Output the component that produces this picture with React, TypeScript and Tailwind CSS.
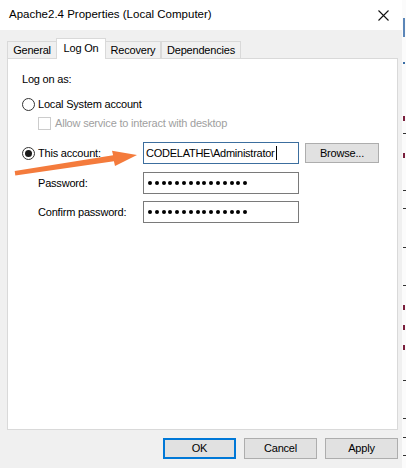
import React from "react";

const font = { fontFamily: '"Liberation Sans", Arial, sans-serif' };

function Radio({ checked }: { checked?: boolean }) {
  return (
    <div className="w-[13px] h-[13px] rounded-full border border-[#333333] bg-white flex items-center justify-center shrink-0">
      {checked && <div className="w-[7px] h-[7px] rounded-full bg-[#1a1a1a]" />}
    </div>
  );
}

function Dots() {
  return (
    <div className="flex gap-[2.8px] items-center pl-[4px]">
      {Array.from({ length: 15 }).map((_, i) => (
        <div key={i} className="w-[4px] h-[4px] rounded-full bg-black" />
      ))}
    </div>
  );
}

function Btn({ label, primary }: { label: string; primary?: boolean }) {
  return (
    <div
      className={
        "w-[73px] h-[21px] flex items-center justify-center bg-[#e1e1e1] text-[11px] tracking-[-0.2px] text-black " +
        (primary ? "border-2 border-[#0078d7]" : "border border-[#adadad]")
      }
    >
      {label}
    </div>
  );
}

export default function App() {
  const tabs = ["General", "Log On", "Recovery", "Dependencies"];
  const tabW = [49, 50, 55, 80];
  return (
    <div className="relative w-[406px] h-[468px] flex overflow-hidden bg-[#f0f0f0]" style={font}>
      {/* dialog */}
      <div className="w-[402px] h-[468px] flex flex-col bg-[#f0f0f0]">
        {/* title bar */}
        <div className="h-[30px] bg-white flex items-center justify-between pl-[9px] pr-[13px]">
          <span className="text-[11.5px] text-black">Apache2.4 Properties (Local Computer)</span>
          <svg width="11" height="11" viewBox="0 0 11 11">
            <path d="M0.5 0.5 L10.5 10.5 M10.5 0.5 L0.5 10.5" stroke="#111" strokeWidth="1.1" />
          </svg>
        </div>
        {/* tabs */}
        <div className="flex items-end pl-[7px] mt-[8px] h-[20px]">
          {tabs.map((t, i) => {
            const sel = i === 1;
            return (
              <div
                key={t}
                style={{ width: tabW[i] }}
                className={
                  "flex items-center justify-center text-[11px] tracking-[-0.2px] text-black border-[#d9d9d9] border-t border-l border-r " +
                  (sel
                    ? "h-[21px] bg-white -mb-px relative z-10 "
                    : "h-[17px] bg-[#f0f0f0] ") +
                  (i === 2 ? "border-l-0 " : "") +
                  (i === 0 ? "border-r-0 " : "")
                }
              >
                <span className={sel ? "-mt-[2px]" : ""}>{t}</span>
              </div>
            );
          })}
        </div>
        {/* panel */}
        <div className="ml-[7px] w-[391px] h-[372px] bg-white border border-[#d9d9d9] flex flex-col text-[11px] tracking-[-0.2px] text-black">
          <div className="h-[20px] mt-[10px] flex items-center pl-[14px]">Log on as:</div>
          <div className="h-[20px] mt-[5px] flex items-center pl-[14px] gap-[3px]">
            <Radio />
            <span>Local System account</span>
          </div>
          <div className="h-[18px] flex items-center pl-[30px] gap-[4px]">
            <div className="w-[13px] h-[13px] border border-[#cccccc] bg-white" />
            <span className="text-[#a0a0a0]">Allow service to interact with desktop</span>
          </div>
          <div className="h-[22px] mt-[10px] flex items-center pl-[14px]">
            <div className="w-[121px] flex items-center gap-[3px]">
              <Radio checked />
              <span>This account:</span>
            </div>
            <div className="w-[156px] h-[22px] border border-[#3c6e9e] flex items-center pl-[2px]">
              <span className="text-[11px] tracking-[-0.25px]">CODELATHE\Administrator</span>
              <div className="w-px h-[14px] bg-black ml-[1px]" />
            </div>
            <div className="ml-[6px] w-[74px] h-[20px] bg-[#e1e1e1] border border-[#adadad] flex items-center justify-center">
              Browse...
            </div>
          </div>
          <div className="h-[22px] mt-[8px] flex items-center pl-[30px]">
            <div className="w-[105px]">Password:</div>
            <div className="w-[156px] h-[22px] border border-[#7a7a7a] flex items-center">
              <Dots />
            </div>
          </div>
          <div className="h-[22px] mt-[7px] flex items-center pl-[30px]">
            <div className="w-[105px]">Confirm password:</div>
            <div className="w-[156px] h-[22px] border border-[#7a7a7a] flex items-center">
              <Dots />
            </div>
          </div>
        </div>
        {/* buttons */}
        <div className="flex justify-end gap-[8px] pr-[4px] mt-[8px]">
          <Btn label="OK" primary />
          <Btn label="Cancel" />
          <Btn label="Apply" />
        </div>
      </div>
      {/* background window strip */}
      <div className="relative w-[4px] h-[468px] bg-[#fbfbfb]">
        <div className="absolute left-[1px] top-[18px] w-[2px] h-[19px] bg-[#5b86b8]" />
        <div className="absolute left-[1px] top-[62px] w-[2px] h-[2px] bg-[#3a6ea5]" />
        {[116, 153, 305, 325, 345].map((y) => (
          <div key={y} className="absolute left-[1px] w-[2px] h-[5px] bg-[#7a1f3d]" style={{ top: y }} />
        ))}
        {[133, 190, 208, 247, 285, 380, 418, 437, 455].map((y) => (
          <div key={y} className="absolute left-[1px] w-[3px] h-px bg-[#333]" style={{ top: y }} />
        ))}
      </div>
      {/* orange arrow annotation */}
      <svg className="absolute left-0 top-0 pointer-events-none" width="406" height="468">
        <polygon
          points="14.7,171 113.1,155.3 112,150.7 137,155 115,166 113.9,161.3 15.3,175.5"
          fill="#f47b3c"
        />
      </svg>
    </div>
  );
}
